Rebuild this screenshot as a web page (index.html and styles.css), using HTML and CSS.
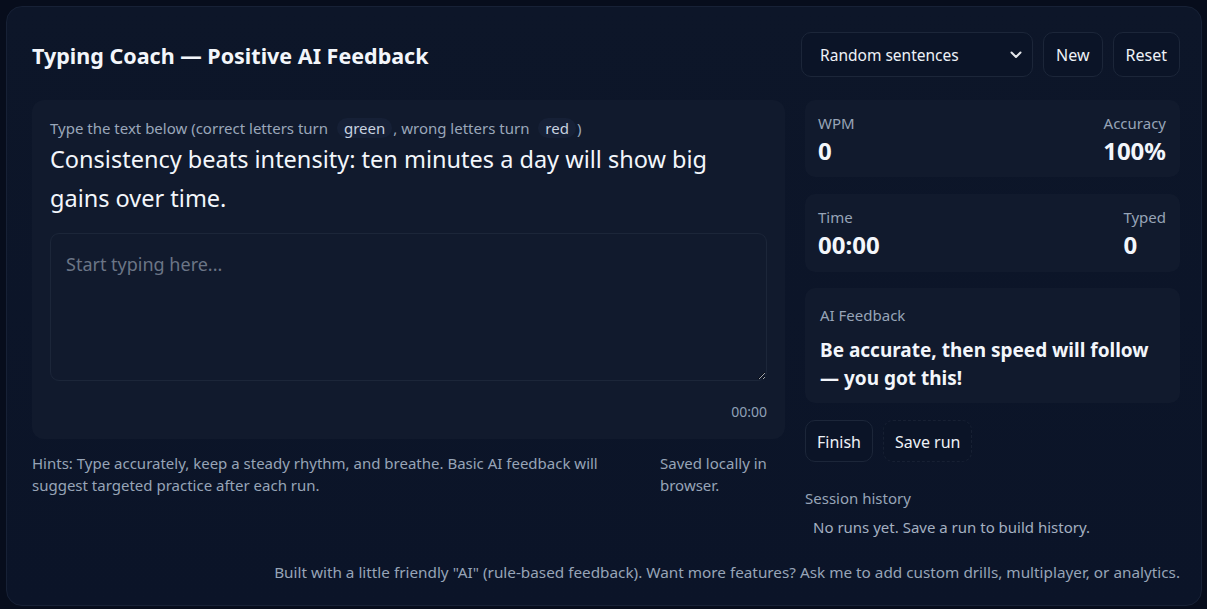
FILE: index.html
```html
<!DOCTYPE html>
<html lang="en">
<head>
<meta charset="utf-8">
<title>Typing Coach</title>
<link rel="stylesheet" href="styles.css">
</head>
<body>
<div class="app">
  <div class="layout">
    <h1 class="title">Typing Coach — Positive AI Feedback</h1>
    <div class="controls">
      <div class="select">
        <span>Random sentences</span>
        <svg class="chev" width="12" height="8" viewBox="0 0 12 8"><path d="M1.5 1.5 L6 6 L10.5 1.5" fill="none" stroke="#e5e7eb" stroke-width="2" stroke-linecap="round" stroke-linejoin="round"/></svg>
      </div>
      <button class="btn">New</button>
      <button class="btn">Reset</button>
    </div>

    <div class="left">
      <div class="panel">
        <div class="label">Type the text below (correct letters turn <span class="pill">green</span>, wrong letters turn <span class="pill">red</span>)</div>
        <div class="sentence">Consistency beats intensity: ten minutes a day will show big gains over time.</div>
        <textarea class="input" placeholder="Start typing here..."></textarea>
        <div class="timer">00:00</div>
      </div>
      <div class="hints">
        <div class="hint-text">Hints: Type accurately, keep a steady rhythm, and breathe. Basic AI feedback will suggest targeted practice after each run.</div>
        <div class="saved">Saved locally in browser.</div>
      </div>
    </div>

    <div class="right">
      <div class="stat">
        <div class="stat-col">
          <div class="stat-label">WPM</div>
          <div class="stat-value">0</div>
        </div>
        <div class="stat-col end">
          <div class="stat-label">Accuracy</div>
          <div class="stat-value">100%</div>
        </div>
      </div>
      <div class="stat">
        <div class="stat-col">
          <div class="stat-label">Time</div>
          <div class="stat-value">00:00</div>
        </div>
        <div class="stat-col">
          <div class="stat-label">Typed</div>
          <div class="stat-value">0</div>
        </div>
      </div>
      <div class="feedback">
        <div class="fb-label">AI Feedback</div>
        <div class="fb-text">Be accurate, then speed will follow — you got this!</div>
      </div>
      <div class="actions">
        <button class="btn act">Finish</button>
        <button class="btn act dashed">Save run</button>
      </div>
      <div class="history-label">Session history</div>
      <div class="history-empty">No runs yet. Save a run to build history.</div>
    </div>
  </div>
  <div class="footer">Built with a little friendly "AI" (rule-based feedback). Want more features? Ask me to add custom drills, multiplayer, or analytics.</div>
</div>
</body>
</html>
```

FILE: styles.css
```css
* { box-sizing: border-box; }
html, body { margin: 0; padding: 0; }
body {
  background: #070d1c;
  font-family: "Segoe UI", "Noto Sans", sans-serif;
  color: #eef2f7;
  padding: 6px 5px 3px 6px;
  height: 609px;
  overflow: hidden;
}
.app {
  height: 600px;
  border: 1px solid #172136;
  border-radius: 16px;
  background: linear-gradient(180deg, #0d1629 0%, #0b1428 100%);
  padding: 25px 21px 0 25px;
  display: flex;
  flex-direction: column;
}
.layout {
  display: grid;
  grid-template-columns: 753px 375px;
  column-gap: 20px;
  row-gap: 23px;
}
.title {
  margin: 0;
  font-size: 21.5px;
  font-weight: 700;
  line-height: 47px;
  height: 45px;
  color: #f3f6fb;
}
.controls {
  display: flex;
  gap: 10px;
  justify-content: flex-end;
  margin-left: -4px;
}
.select {
  width: 232px;
  height: 45px;
  border: 1px solid #1c2639;
  border-radius: 10px;
  background: #0b1427;
  display: flex;
  align-items: center;
  justify-content: space-between;
  padding: 1px 10px 0 18px;
  font-size: 15.5px;
  color: #eef2f7;
}
.btn {
  font-family: inherit;
  font-size: 16px;
  color: #eef2f7;
  background: #0b1427;
  border: 1px solid #1c2639;
  border-radius: 10px;
  height: 45px;
  padding: 1px 12px 0;
}
.left { display: flex; flex-direction: column; }
.panel {
  background: #111a2d;
  border-radius: 12px;
  padding: 18px 18px 17px 18px;
  height: 339px;
  display: flex;
  flex-direction: column;
}
.label {
  font-size: 15px;
  line-height: 20px;
  color: #9aa7ba;
}
.pill {
  display: inline-block;
  background: #162036;
  border-radius: 999px;
  padding: 0 7px;
  margin: 0 1px 0 5px;
  color: #c9d3e0;
}
.sentence {
  margin-top: 2px;
  font-size: 23.5px;
  line-height: 39px;
  color: #f3f6fb;
}
.input {
  margin-top: 15px;
  height: 149px;
  width: 100%;
  background: #111a2d;
  border: 1px solid #1c2639;
  border-radius: 9px;
  padding: 18px 15px;
  font-family: inherit;
  font-size: 18px;
  color: #eef2f7;
  resize: vertical;
  outline: none;
}
.input::placeholder { color: #6b7586; }
.timer {
  margin-top: 21px;
  text-align: right;
  font-size: 14px;
  line-height: 20px;
  color: #8fa0b6;
}
.hints {
  margin-top: 13px;
  display: flex;
  justify-content: space-between;
  font-size: 15px;
  line-height: 22px;
  color: #97a4b7;
}
.hint-text { width: 600px; }
.saved { width: 125px; }
.right { display: flex; flex-direction: column; }
.stat {
  background: #111a2d;
  border-radius: 10px;
  height: 77px;
  padding: 12px 14px 0 13px;
  display: flex;
  justify-content: space-between;
  margin-bottom: 17px;
}
.stat + .stat { height: 78px; margin-bottom: 16px; }
.stat-col { display: flex; flex-direction: column; }
.stat-col.end { align-items: flex-end; }
.stat-label { font-size: 15px; line-height: 22px; color: #97a4b7; }
.stat-value { font-size: 24px; font-weight: 700; line-height: 33px; color: #f3f6fb; }
.feedback {
  background: #111a2d;
  border-radius: 10px;
  height: 115px;
  padding: 17px 15px 0 15px;
}
.fb-label { font-size: 15px; line-height: 20px; color: #97a4b7; }
.fb-text {
  margin-top: 11px;
  font-size: 19px;
  font-weight: 700;
  line-height: 28px;
  color: #f3f6fb;
}
.actions {
  display: flex;
  gap: 10px;
  margin-top: 17px;
}
.act { height: 42px; padding: 1px 11px 0; }
.dashed { border-style: dashed; border-color: #172033; }
.history-label {
  margin-top: 26px;
  font-size: 15px;
  line-height: 20px;
  color: #97a4b7;
}
.history-empty {
  margin-top: 9px;
  padding-left: 8px;
  font-size: 15px;
  line-height: 20px;
  color: #a4b0c1;
}
.footer {
  margin-top: auto;
  margin-bottom: 23px;
  text-align: right;
  font-size: 15.3px;
  line-height: 20px;
  color: #97a4b7;
}
```
